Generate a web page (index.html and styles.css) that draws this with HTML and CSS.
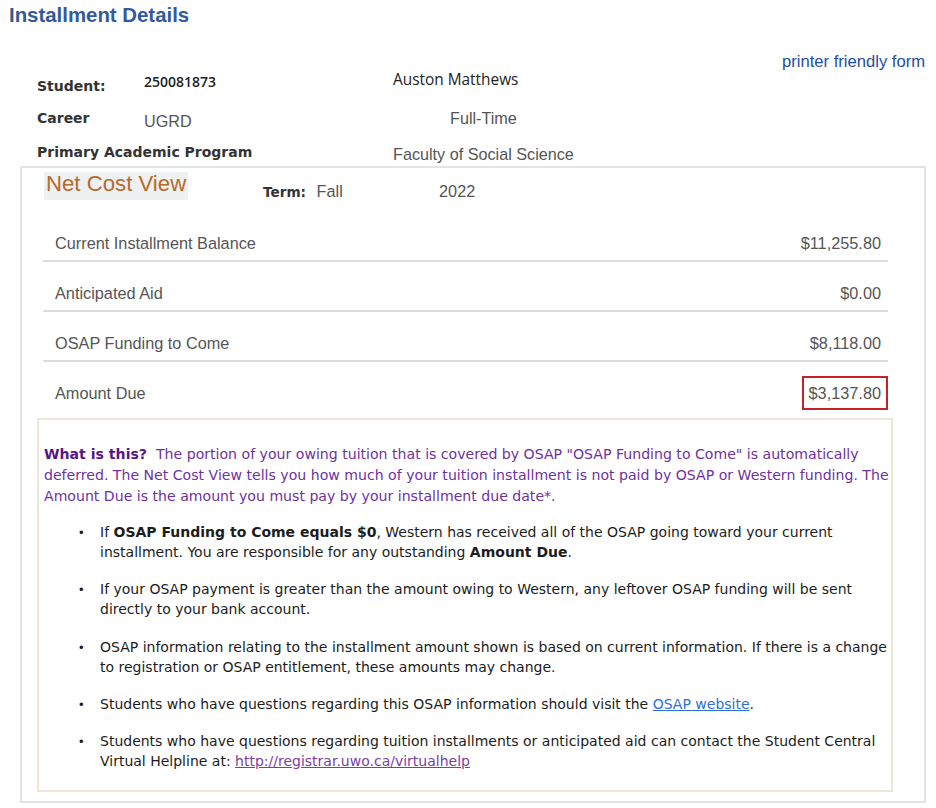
FILE: index.html
```html
<!DOCTYPE html>
<html lang="en">
<head>
    <meta charset="UTF-8">
    <title>Installment Details</title>
    <link rel="stylesheet" href="styles.css">
</head>
<body>
    <h1 class="page-title">Installment Details</h1>

    <div class="student-block">
        <div class="student-info">
            <div class="info-label label-student">Student:</div>
            <div class="info-id">250081873</div>
            <div class="info-name">Auston Matthews</div>

            <div class="info-label">Career</div>
            <div class="info-value value-career">UGRD</div>
            <div class="info-value info-load">Full-Time</div>

            <div class="info-label span-two">Primary Academic Program</div>
            <div class="info-value value-program">Faculty of Social Science</div>
        </div>
        <a href="#" class="printer-link">printer friendly form</a>
    </div>

    <div class="net-cost-box">
        <div class="net-cost-head">
            <div class="net-cost-title">Net Cost View</div>
            <div class="term">
                <span class="term-label">Term:</span>
                <span class="term-name">Fall</span>
                <span class="term-year">2022</span>
            </div>
        </div>

        <div class="cost-table">
            <div class="cost-row">
                <span>Current Installment Balance</span>
                <span class="cost-amount">$11,255.80</span>
            </div>
            <div class="cost-row">
                <span>Anticipated Aid</span>
                <span class="cost-amount">$0.00</span>
            </div>
            <div class="cost-row">
                <span>OSAP Funding to Come</span>
                <span class="cost-amount">$8,118.00</span>
            </div>
            <div class="cost-row last">
                <span>Amount Due</span>
                <span class="cost-amount due">$3,137.80</span>
            </div>
        </div>

        <div class="info-box">
            <p class="info-intro"><strong>What is this?</strong>&nbsp; The portion of your owing tuition that is covered by OSAP "OSAP Funding to Come" is automatically deferred. The Net Cost View tells you how much of your tuition installment is not paid by OSAP or Western funding. The Amount Due is the amount you must pay by your installment due date*.</p>
            <ul class="info-list">
                <li>If <strong>OSAP Funding to Come equals $0</strong>, Western has received all of the OSAP going toward your current installment. You are responsible for any outstanding <strong>Amount Due</strong>.</li>
                <li>If your OSAP payment is greater than the amount owing to Western, any leftover OSAP funding will be sent directly to your bank account.</li>
                <li>OSAP information relating to the installment amount shown is based on current information. If there is a change to registration or OSAP entitlement, these amounts may change.</li>
                <li>Students who have questions regarding this OSAP information should visit the <a href="#" class="osap-link">OSAP website</a>.</li>
                <li>Students who have questions regarding tuition installments or anticipated aid can contact the Student Central Virtual Helpline at: <a href="#" class="helpline-link">http://registrar.uwo.ca/virtualhelp</a></li>
            </ul>
        </div>
    </div>
</body>
</html>
```

FILE: styles.css
```css
body {
    margin: 0;
    padding: 0;
    background: #fff;
    font-family: "Liberation Sans", Arial, sans-serif;
    color: #333;
}

.page-title {
    margin: 0;
    padding: 5px 0 0 9px;
    font-size: 20.4px;
    font-weight: bold;
    color: #35599a;
    line-height: 20px;
}

/* student header */
.student-block {
    display: flex;
    justify-content: space-between;
    padding: 28px 11px 0 37px;
}

.student-info {
    display: grid;
    grid-template-columns: 107px 249px auto;
    grid-auto-rows: 20px;
    row-gap: 14px;
    padding-top: 21px;
}

.info-label {
    font-family: "DejaVu Sans", Verdana, sans-serif;
    font-size: 14px;
    font-weight: bold;
    color: #333;
    line-height: 20px;
}

.label-student {
    margin-top: 2px;
}

.span-two {
    grid-column: span 2;
}

.info-id,
.info-name {
    font-family: "Open Sans", sans-serif;
    font-weight: 500;
    color: #222;
    line-height: 20px;
}

.info-id {
    font-size: 14px;
    font-weight: 600;
    margin-top: -2px;
}

.info-name {
    font-size: 15.4px;
    margin-top: -4px;
}

.info-value {
    font-size: 16.2px;
    color: #555;
    line-height: 20px;
}

.value-career {
    margin-top: 3px;
}

.value-program {
    margin-top: 2px;
}

.info-load {
    padding-left: 57px;
}

.printer-link {
    font-size: 16.6px;
    color: #1f4f9c;
    text-decoration: none;
    line-height: 20px;
    margin-top: -1px;
    height: 20px;
}

/* net cost panel */
.net-cost-box {
    margin: 4px 10px 6px 20px;
    border: 2px solid #e2e2e9;
    padding: 4px 31px 9px 15px;
}

.net-cost-head {
    display: flex;
    align-items: flex-start;
    margin-left: 7px;
}

.net-cost-title {
    width: 144px;
    height: 28px;
    background: #eef1f1;
    color: #b8692b;
    font-size: 22.2px;
    line-height: 24px;
    padding-left: 2px;
    box-sizing: border-box;
}

.term {
    margin-left: 75px;
    padding-top: 9px;
    font-size: 16.3px;
    color: #555;
    line-height: 20px;
}

.term-label {
    font-family: "DejaVu Sans", Verdana, sans-serif;
    font-weight: bold;
    font-size: 13.6px;
    color: #333;
}

.term-name {
    display: inline-block;
    width: 118px;
    margin-left: 6px;
}

.cost-table {
    margin: 10px 5px 0 6px;
}

.cost-row {
    display: flex;
    justify-content: space-between;
    align-items: center;
    height: 50px;
    padding: 14px 7px 0 12px;
    box-sizing: border-box;
    border-bottom: 2px solid #dcdcdc;
    font-size: 16.3px;
    color: #555;
}

.cost-row.last {
    border-bottom: none;
    height: 48px;
}

.cost-amount.due {
    border: 2px solid #c8202a;
    margin-right: -7px;
    padding: 0 5px;
    height: 34px;
    line-height: 30px;
    box-sizing: border-box;
}

/* explanation box */
.info-box {
    margin-top: 8px;
    border: 2px solid #ece7d8;
    padding: 24px 0 19px 5px;
    font-family: "DejaVu Sans", Verdana, sans-serif;
    font-size: 14.1px;
    line-height: 21px;
}

.info-intro {
    margin: 0 -6px 0 0;
    color: #7030a0;
}

.info-intro strong {
    color: #5a1488;
}

.info-list {
    margin: 15px -4px 0 0;
    padding-left: 56px;
    color: #1c1c1c;
    font-size: 14px;
}

.info-list li {
    line-height: 20px;
    margin-bottom: 17px;
}

.info-list li:nth-child(2) {
    margin-bottom: 18px;
}

.info-list li::marker {
    content: "\2022\00a0\00a0\00a0\00a0";
    font-size: 12px;
}

.info-list li:last-child {
    margin-bottom: 0;
}

.osap-link {
    color: #2e6fd6;
}

.helpline-link {
    color: #7b3ea3;
}
```
